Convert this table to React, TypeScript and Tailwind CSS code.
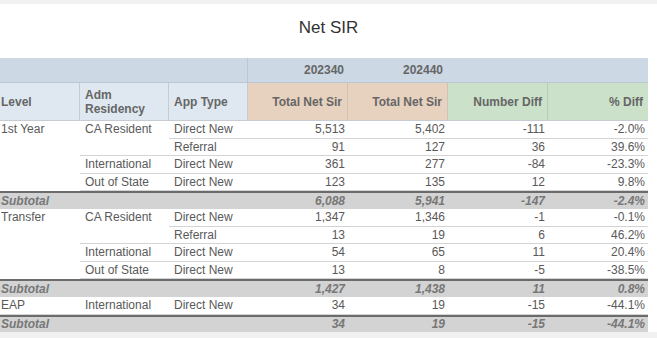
import React from "react";

type Row = {
  level?: { text: string; span: number };
  res?: { text: string; span: number };
  app?: string;
  vals: string[];
  subtotal?: boolean;
};

const rows: Row[] = [
  { level: { text: "1st Year", span: 4 }, res: { text: "CA Resident", span: 2 }, app: "Direct New", vals: ["5,513", "5,402", "-111", "-2.0%"] },
  { app: "Referral", vals: ["91", "127", "36", "39.6%"] },
  { res: { text: "International", span: 1 }, app: "Direct New", vals: ["361", "277", "-84", "-23.3%"] },
  { res: { text: "Out of State", span: 1 }, app: "Direct New", vals: ["123", "135", "12", "9.8%"] },
  { subtotal: true, vals: ["6,088", "5,941", "-147", "-2.4%"] },
  { level: { text: "Transfer", span: 4 }, res: { text: "CA Resident", span: 2 }, app: "Direct New", vals: ["1,347", "1,346", "-1", "-0.1%"] },
  { app: "Referral", vals: ["13", "19", "6", "46.2%"] },
  { res: { text: "International", span: 1 }, app: "Direct New", vals: ["54", "65", "11", "20.4%"] },
  { res: { text: "Out of State", span: 1 }, app: "Direct New", vals: ["13", "8", "-5", "-38.5%"] },
  { subtotal: true, vals: ["1,427", "1,438", "11", "0.8%"] },
  { level: { text: "EAP", span: 1 }, res: { text: "International", span: 1 }, app: "Direct New", vals: ["34", "19", "-15", "-44.1%"] },
  { subtotal: true, vals: ["34", "19", "-15", "-44.1%"] },
];

export default function App() {
  const cells: React.ReactNode[] = [];
  rows.forEach((r, i) => {
    const rowStart = i + 1;
    if (r.subtotal) {
      cells.push(
        <div
          key={`s${i}`}
          style={{ gridRow: rowStart, gridColumn: "1 / 4" }}
          className="bg-[#d3d3d3] border-t-2 border-[#6b6b6b] pl-[1px] flex items-center font-bold italic text-[#777777]"
        >
          Subtotal
        </div>
      );
      r.vals.forEach((v, j) => {
        cells.push(
          <div
            key={`s${i}-${j}`}
            style={{ gridRow: rowStart, gridColumn: 4 + j }}
            className="bg-[#d3d3d3] border-t-2 border-[#6b6b6b] pr-[3px] flex items-center justify-end font-bold italic text-[#777777]"
          >
            {v}
          </div>
        );
      });
      return;
    }
    const bb = "border-b border-[#d4d4d4]";
    if (r.level) {
      cells.push(
        <div
          key={`l${i}`}
          style={{ gridRow: `${rowStart} / span ${r.level.span}`, gridColumn: 1 }}
          className={`pl-[1px] ${r.level.span === 1 ? bb : ""}`}
        >
          <div className="h-[16.6px] flex items-center">{r.level.text}</div>
        </div>
      );
    }
    if (r.res) {
      cells.push(
        <div
          key={`r${i}`}
          style={{ gridRow: `${rowStart} / span ${r.res.span}`, gridColumn: 2 }}
          className={`pl-[5px] ${bb}`}
        >
          <div className="h-[16.6px] flex items-center">{r.res.text}</div>
        </div>
      );
    }
    cells.push(
      <div key={`a${i}`} style={{ gridRow: rowStart, gridColumn: 3 }} className={`pl-[5px] flex items-center ${bb}`}>
        {r.app}
      </div>
    );
    r.vals.forEach((v, j) => {
      cells.push(
        <div
          key={`v${i}-${j}`}
          style={{ gridRow: rowStart, gridColumn: 4 + j }}
          className={`pr-[3px] flex items-center justify-end ${bb}`}
        >
          {v}
        </div>
      );
    });
  });

  return (
    <div
      className="w-[657px] h-[338px] bg-[#f1f1f1] pt-[4px] overflow-hidden"
      style={{ fontFamily: '"Liberation Sans", Arial, sans-serif' }}
    >
      <div className="bg-white h-[328px]">
        <div className="h-[54px] flex items-center justify-center text-[17px] text-[#333333] pb-[7px]">
          Net SIR
        </div>
        <div className="w-[648px] text-[12px] leading-[14px]">
          {/* header row 1 */}
          <div className="grid grid-cols-[248px_100px_100px_200px] h-[25px] bg-[#ccd8e4] border-b border-[#bcc7d2] font-bold text-[#666666]">
            <div className="border-r border-[#bcc7d2]" />
            <div className="flex items-center justify-end pr-[4px]">202340</div>
            <div className="flex items-center justify-end pr-[5px]">202440</div>
            <div />
          </div>
          {/* header row 2 */}
          <div className="grid grid-cols-[80px_89px_79px_100px_100px_100px_100px] h-[38px] font-bold text-[#666666] border-b border-[#c6ccd2]">
            <div className="bg-[#dfe8f0] border-r border-[#c3cbd3] flex items-center pl-[1px]">Level</div>
            <div className="bg-[#dfe8f0] border-r border-[#c3cbd3] flex items-center pl-[5px]">
              Adm
              <br />
              Residency
            </div>
            <div className="bg-[#dfe8f0] border-r border-[#c3cbd3] flex items-center pl-[5px]">App Type</div>
            <div className="bg-[#e7d1bf] border-r border-[#cfc3b8] flex items-center justify-end pr-[5px]">Total Net Sir</div>
            <div className="bg-[#e7d1bf] border-r border-[#cfc3b8] flex items-center justify-end pr-[5px]">Total Net Sir</div>
            <div className="bg-[#cbe1c9] border-r border-[#b8cbb6] flex items-center justify-end pr-[5px]">Number Diff</div>
            <div className="bg-[#cbe1c9] flex items-center justify-end pr-[5px]">% Diff</div>
          </div>
          {/* body */}
          <div className="grid grid-cols-[80px_89px_79px_100px_100px_100px_100px] auto-rows-[17.6px] text-[#595959]">
            {cells}
          </div>
        </div>
      </div>
    </div>
  );
}
